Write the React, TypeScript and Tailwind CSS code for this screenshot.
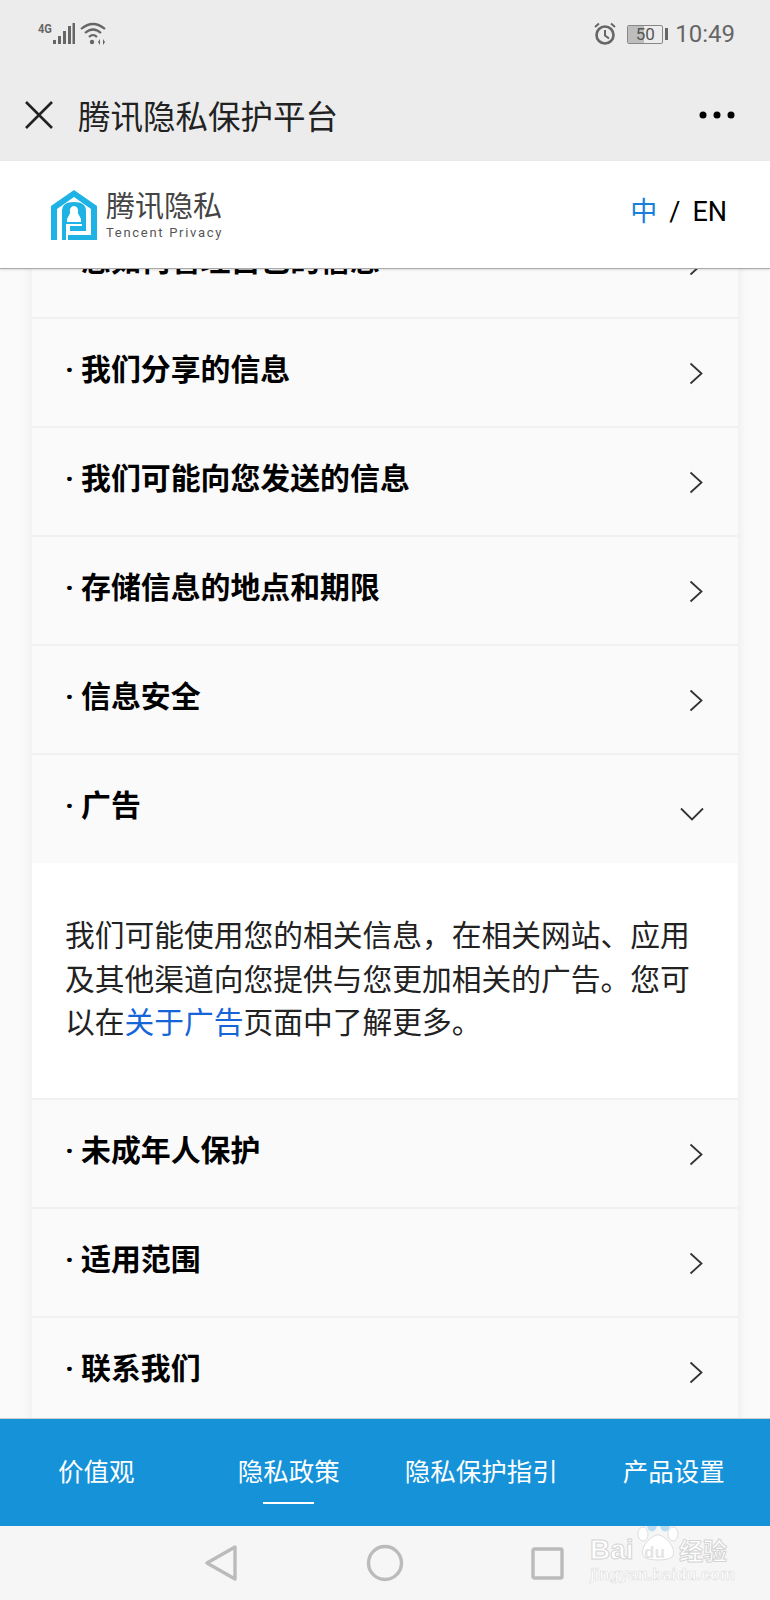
const cjk = "font-['Roboto','Noto_Sans_CJK_SC',sans-serif]";

function Chevron() {
  return (
    <svg width="14" height="23" viewBox="0 0 14 23" fill="none" stroke="#333" strokeWidth="1.8" className="mt-[2px] shrink-0">
      <path d="M1.5 1.5 L12.5 11.5 L1.5 21.5" />
    </svg>
  );
}

function ChevronOpen() {
  return (
    <svg width="24" height="14" viewBox="0 0 24 14" fill="none" stroke="#333" strokeWidth="1.8" className="mt-[10px] -mr-[1px] shrink-0">
      <path d="M1 1.5 L12 12.5 L23 1.5" />
    </svg>
  );
}

function Row({ title }: { title: string }) {
  return (
    <div className="flex h-[109px] items-center justify-between border-b-2 border-[#f1f1f1] bg-[#fafafa] pl-[33px] pr-[35px]">
      <div className="-mt-[6px] flex items-center text-[29.9px] font-bold leading-[40px] text-black">
        <span className="w-4">·</span>
        {title}
      </div>
      <Chevron />
    </div>
  );
}

function StatusBar() {
  return (
    <div className="flex h-[70px] items-start justify-between pl-[38px] pr-[35px] pt-[22px]">
      <div className="flex items-start">
        <span className="mt-[1px] origin-left scale-x-[0.85] font-['Roboto',sans-serif] text-[13px] font-bold leading-[12px] text-[#666]">4G</span>
        <svg width="24" height="24" viewBox="0 0 24 24" fill="#666" className="-ml-[2px]">
          <rect x="1" y="18" width="3" height="4" />
          <rect x="6" y="14" width="3" height="8" />
          <rect x="11" y="9" width="3" height="13" />
          <rect x="16" y="4" width="3" height="18" />
          <rect x="20.5" y="1" width="2.5" height="21" />
        </svg>
        <svg width="28" height="24" viewBox="0 0 28 24" fill="none" stroke="#666" strokeWidth="2.2" className="ml-[4px]">
          <path d="M1 7 Q13 -3 25 7" />
          <path d="M5 11 Q13 4 21 11" />
          <path d="M9 15 Q13 11 17 15" />
          <circle cx="12" cy="20" r="2.2" fill="#666" stroke="none" />
          <path d="M20 17 L18 20 L20 23 Z" fill="#666" stroke="none" />
          <path d="M23 17 L25 20 L23 23 Z" fill="#666" stroke="none" />
        </svg>
      </div>
      <div className="flex items-center">
        <svg width="24" height="24" viewBox="0 0 24 24" fill="none" stroke="#666" strokeWidth="2.6">
          <circle cx="12" cy="13" r="8.5" />
          <path d="M12 8 V13.5 L16 16.5" strokeWidth="2" />
          <path d="M2 5 L6 1.5 M22 5 L18 1.5" strokeWidth="2" />
        </svg>
        <div className="relative ml-[10px] flex h-[19px] w-[36px] items-center justify-center overflow-hidden rounded-[2px] border border-[#888]">
          <div className="absolute inset-y-0 left-0 w-[16px] bg-[#bdbdbd]" />
          <span className="relative font-['Roboto',sans-serif] text-[17px] leading-[16px] text-[#555]">50</span>
        </div>
        <div className="ml-[2px] h-[12px] w-[3px] bg-[#666]" />
        <span className="ml-[7px] font-['Roboto',sans-serif] text-[24px] leading-[24px] text-[#666]">10:49</span>
      </div>
    </div>
  );
}

function TitleBar() {
  return (
    <div className="flex h-[91px] items-center justify-between pb-[2px] pl-[25px] pr-[35px]">
      <div className="flex items-center">
        <svg width="28" height="28" viewBox="0 0 28 28" stroke="#222" strokeWidth="2.6">
          <path d="M1 1 L27 27 M27 1 L1 27" />
        </svg>
        <span className="ml-[25px] mt-[6px] text-[32.5px] leading-[44px] text-[#222]">腾讯隐私保护平台</span>
      </div>
      <svg width="36" height="8" viewBox="0 0 36 8" fill="#000">
        <circle cx="4" cy="4" r="3.5" />
        <circle cx="18" cy="4" r="3.5" />
        <circle cx="32" cy="4" r="3.5" />
      </svg>
    </div>
  );
}

function Logo() {
  return (
    <div className="mt-[2px] flex items-center">
      <svg width="46" height="50" viewBox="0 0 46 50">
        <path fillRule="evenodd" fill="#1fb2e4" d="M23 0 L46 16 V50 H0 V16 Z M23 7 L6 19 V50 H17 V45 H40 V19 Z" />
        <path fill="#1fb2e4" d="M11 50 V21 Q11 12 23 12 Q35 12 35 21 V41 H19 V36 H31 V34 H15 V50 Z" />
        <path fill="#fff" d="M23 16 C26.5 16 27.8 20 26.8 23 L30 29 V32 H16 V29 L19.2 23 C18.2 20 19.5 16 23 16 Z" />
        <path fill="#fff" d="M15 34 H19 V45 H15 Z" />
      </svg>
      <div className="ml-[9px] mt-[2px] flex flex-col">
        <span className="text-[29px] leading-[33px] text-[#444]">腾讯隐私</span>
        <span className="mt-[1px] whitespace-nowrap font-['Roboto',sans-serif] text-[13px] leading-[15px] tracking-[1.7px] text-[#555]">Tencent Privacy</span>
      </div>
    </div>
  );
}

function Watermark() {
  return (
    <div className="absolute bottom-[16px] left-[590px] h-[66px] w-[140px]">
      <svg width="42" height="44" viewBox="0 0 42 44" className="absolute left-[47px] top-0">
        <ellipse cx="15" cy="7" rx="5" ry="6.5" fill="#b9dcf3" />
        <ellipse cx="28" cy="7" rx="5" ry="6.5" fill="#b9dcf3" />
        <ellipse cx="6" cy="16" rx="5" ry="7" fill="#fff" stroke="#ddd" />
        <ellipse cx="36" cy="16" rx="5" ry="7" fill="#fff" stroke="#ddd" />
        <path d="M21 17 C29 17 41 32 35 39 C30 43 12 43 7 39 C1 32 13 17 21 17 Z" fill="#fff" stroke="#ddd" />
      </svg>
      <div className="absolute left-0 top-[17px] whitespace-nowrap font-['Liberation_Sans',sans-serif] text-[28px] font-bold leading-[30px] text-white [-webkit-text-stroke:1px_#d4d4d4]">
        Bai
      </div>
      <div className="absolute left-[54px] top-[25px] whitespace-nowrap font-['Liberation_Sans',sans-serif] text-[17px] font-bold leading-[20px] text-[#e4e4e4]">
        du
      </div>
      <div className="absolute left-[89px] top-[17px] whitespace-nowrap font-['Noto_Sans_CJK_SC',sans-serif] text-[24px] font-bold leading-[30px] text-white [-webkit-text-stroke:1px_#d4d4d4]">
        经验
      </div>
      <div className="absolute left-0 top-[47px] whitespace-nowrap font-['Liberation_Sans',sans-serif] text-[16.5px] font-bold leading-[18px] text-white [-webkit-text-stroke:0.6px_#dcdcdc]">
        jingyan.baidu.com
      </div>
    </div>
  );
}

export default function App() {
  return (
    <div className={`relative flex h-[1600px] w-[770px] flex-col overflow-hidden bg-[#fafafa] ${cjk}`}>
      <div className="bg-[#ececec]">
        <StatusBar />
        <TitleBar />
      </div>

      <header className="relative z-10 flex h-[108px] items-center justify-between border-b border-[#aaa] bg-white pb-[2px] pl-[51px] pr-[43px] shadow-[0_1px_2px_rgba(0,0,0,0.12)]">
        <Logo />
        <div className="-mt-[4px] flex items-center text-[27px] leading-[36px] text-black">
          <span className="text-[#1a7fd8]">中</span>
          <span className="ml-[12px]">/</span>
          <span className="ml-[12px]">EN</span>
        </div>
      </header>

      {/* list is scrolled: first row sits partly under the header */}
      <main className="flex-1 overflow-hidden">
        <div className="mx-[32px] -mt-[59px] shadow-[0_0_12px_rgba(0,0,0,0.07)]">
          <Row title="您如何管理自己的信息" />
          <Row title="我们分享的信息" />
          <Row title="我们可能向您发送的信息" />
          <Row title="存储信息的地点和期限" />
          <Row title="信息安全" />

          <div className="flex h-[108px] items-center justify-between bg-[#fafafa] pl-[33px] pr-[35px]">
            <div className="-mt-[6px] flex items-center text-[29.9px] font-bold leading-[40px] text-black">
              <span className="w-4">·</span>
              广告
            </div>
            <ChevronOpen />
          </div>
          <div className="h-[237px] border-b-2 border-[#f1f1f1] bg-white pl-[33px] pr-[30px] pt-[51px] text-[29.75px] leading-[43.6px] text-[#222]">
            我们可能使用您的相关信息，在相关网站、应用及其他渠道向您提供与您更加相关的广告。您可以在
            <span className="text-[#1565d8]">关于广告</span>
            页面中了解更多。
          </div>

          <Row title="未成年人保护" />
          <Row title="适用范围" />
          <Row title="联系我们" />
        </div>
      </main>

      <nav className="relative z-10 grid h-[108px] grid-cols-4 border-t border-[#ccc] bg-[#1592d8] text-center text-[25.5px] text-white">
        {["价值观", "隐私政策", "隐私保护指引", "产品设置"].map((t, i) => (
          <div key={t} className="flex flex-col items-center pt-[35px]">
            <span className="leading-[36px]">{t}</span>
            {i === 1 && <div className="mt-[12px] h-[2px] w-[51px] bg-white" />}
          </div>
        ))}
      </nav>

      <div className="flex h-[74px] items-center bg-[#f6f6f6] pl-[204px]">
        <svg width="34" height="38" viewBox="0 0 34 38" fill="none" stroke="#bbb" strokeWidth="3.4" strokeLinejoin="round">
          <path d="M31 3 V35 L3 19 Z" />
        </svg>
        <svg width="38" height="38" viewBox="0 0 38 38" fill="none" stroke="#bbb" strokeWidth="3.4" className="ml-[128px]">
          <circle cx="19" cy="19" r="16.5" />
        </svg>
        <svg width="33" height="33" viewBox="0 0 33 33" fill="none" stroke="#bbb" strokeWidth="3.4" strokeLinejoin="round" className="ml-[127px]">
          <rect x="2" y="2" width="29" height="29" rx="1.5" />
        </svg>
      </div>

      <Watermark />
    </div>
  );
}
